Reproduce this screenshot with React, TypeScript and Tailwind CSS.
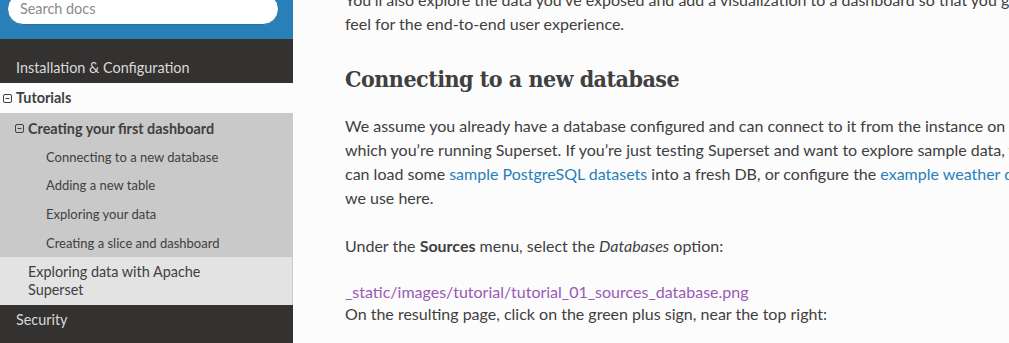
import React from "react";

function MinusBox() {
  return (
    <svg width="9" height="9" viewBox="0 0 9 9" className="shrink-0">
      <rect x="0.5" y="0.5" width="8" height="8" rx="1.5" fill="none" stroke="#404040" strokeWidth="1" />
      <line x1="2.5" y1="4.5" x2="6.5" y2="4.5" stroke="#404040" strokeWidth="1" />
    </svg>
  );
}

const subItems = [
  "Connecting to a new database",
  "Adding a new table",
  "Exploring your data",
  "Creating a slice and dashboard",
];

function Sidebar() {
  return (
    <nav className="w-[293px] shrink-0 bg-[#343131] h-[343px] text-[14.4px] leading-[18px] font-['Lato','Liberation_Sans',sans-serif]">
      <div className="h-[39px] bg-[#2980b9] px-[7px] flex items-start">
        <div className="-mt-[7px] h-[32px] w-[272px] rounded-full bg-white border border-[#2472a4] flex items-center px-[12px] text-[14.4px] text-[#8a8a8a]">
          Search docs
        </div>
      </div>
      <div className="pt-[14px]">
        <a className="block h-[30px] pl-[16px] pt-[6px] text-[#d9d9d9]">Installation &amp; Configuration</a>
        <div className="h-[30px] bg-[#fcfcfc] flex items-center gap-[4px] pl-[3px] font-bold text-[#404040]">
          <MinusBox />
          <span>Tutorials</span>
        </div>
        <div className="bg-[#c9c9c9] text-[#404040]">
          <div className="h-[29.5px] flex items-center gap-[4px] pl-[15px] pt-[2px] font-bold">
            <MinusBox />
            <span>Creating your first dashboard</span>
          </div>
          {subItems.map((s) => (
            <a key={s} className="h-[28.6px] flex items-center pl-[46px] text-[13px]">
              {s}
            </a>
          ))}
        </div>
        <a className="block h-[48px] bg-[#e3e3e3] border-r border-[#c9c9c9] pl-[28px] pr-[16px] py-[6px] text-[#404040]">
          Exploring data with Apache
          <br />
          Superset
        </a>
        <a className="block h-[30px] pl-[16px] pt-[6px] text-[#d9d9d9]">Security</a>
      </div>
    </nav>
  );
}

function Content() {
  return (
    <main className="flex-1 bg-[#fcfcfc] h-[343px] overflow-hidden pl-[52px]">
      <div className="w-[697px] -mt-[12px] text-[16px] leading-[24px] text-[#404040] font-['Lato','Liberation_Sans',sans-serif]">
        <p className="mb-[24px]">
          You’ll also explore the data you’ve exposed and add a visualization to a dashboard so that you get a
          feel for the end-to-end user experience.
        </p>
        <h2 className="pt-[4px] mb-[20px] text-[23px] leading-[30px] font-bold tracking-[-0.5px] font-['DejaVu_Serif_Condensed','DejaVu_Serif',serif]">
          Connecting to a new database
        </h2>
        <p className="mb-[24px]">
          We assume you already have a database configured and can connect to it from the instance on
          which you’re running Superset. If you’re just testing Superset and want to explore sample data, you
          can load some <a className="text-[#2980b9]">sample PostgreSQL datasets</a> into a fresh DB, or
          configure the <a className="text-[#2980b9]">example weather data</a> we use here.
        </p>
        <p className="mb-[24px]">
          Under the <strong>Sources</strong> menu, select the <em>Databases</em> option:
        </p>
        <a className="block h-[20px] leading-[20px] text-[#9b59b6]">
          _static/images/tutorial/tutorial_01_sources_database.png
        </a>
        <p>On the resulting page, click on the green plus sign, near the top right:</p>
      </div>
    </main>
  );
}

export default function App() {
  return (
    <div className="flex w-[1009px] h-[343px] overflow-hidden bg-[#fcfcfc]">
      <Sidebar />
      <Content />
    </div>
  );
}
